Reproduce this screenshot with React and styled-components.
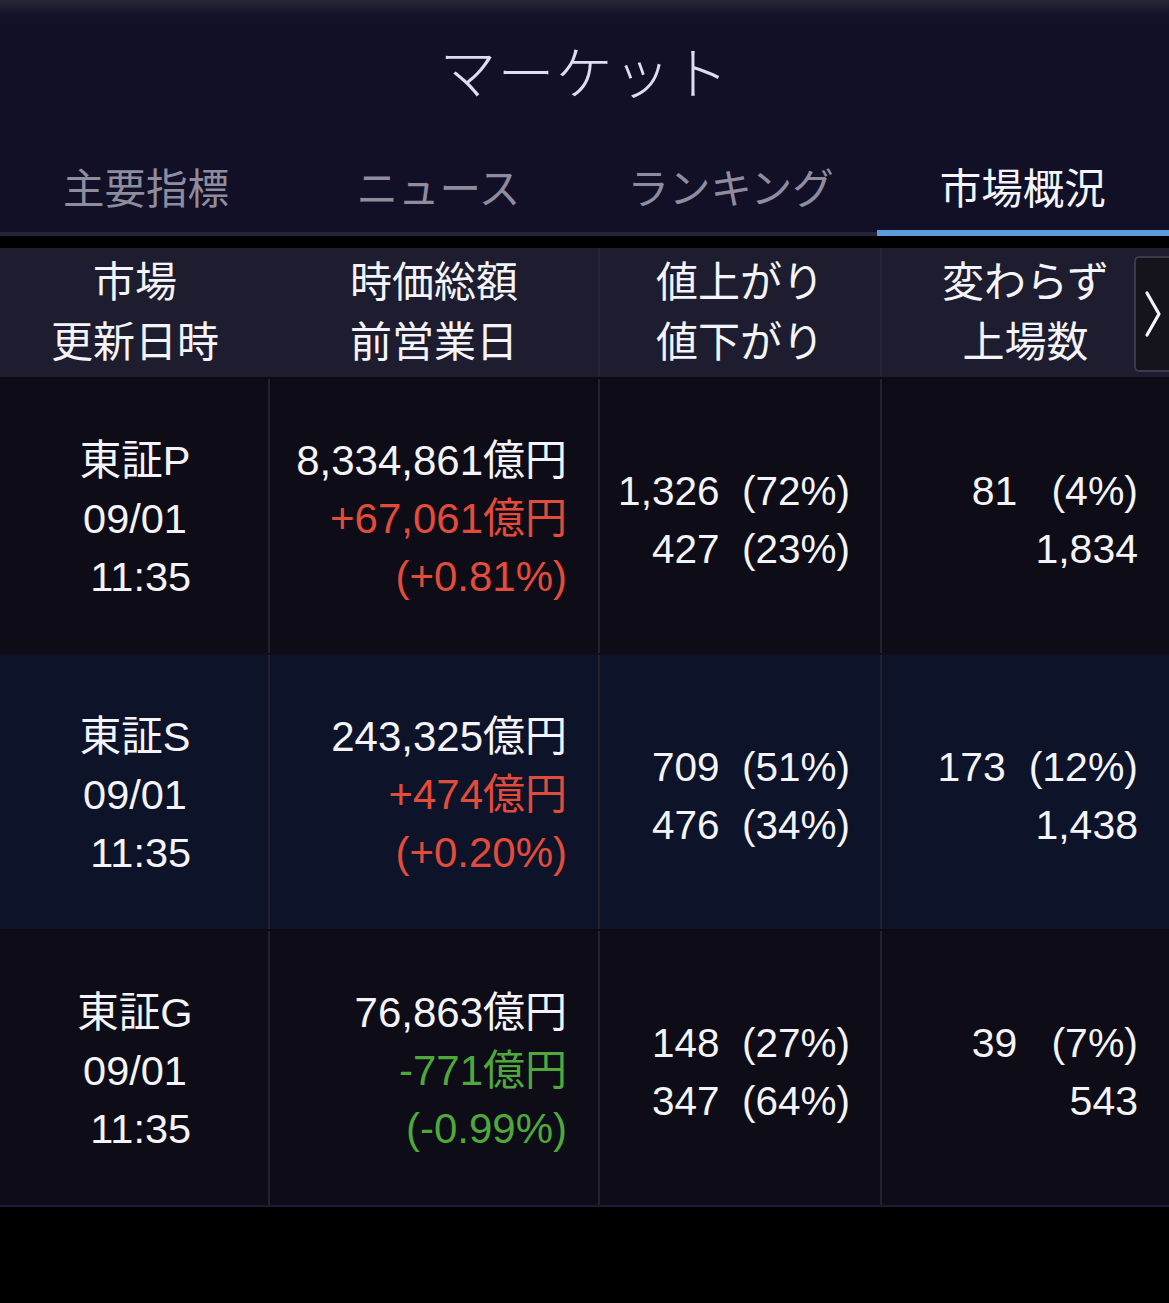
import React from "react";
import styled, { createGlobalStyle } from "styled-components";

const GlobalStyle = createGlobalStyle`
  html, body { margin: 0; padding: 0; background: #000; }
  body { font-family: "Liberation Sans", "Noto Sans CJK JP", sans-serif; }
  * { box-sizing: border-box; }
`;

const Page = styled.div`
  width: 1169px;
  min-height: 1303px;
  background: #000;
  color: #f2f2f8;
`;

const Nav = styled.header`
  background: linear-gradient(#262833 0px, #14122a 14px, #121027 30px);
`;

const TitleBar = styled.div`
  height: 132px;
  padding-top: 6px;
  display: flex;
  align-items: center;
  justify-content: center;
`;

const Title = styled.h1`
  margin: 0;
  font-family: "Noto Sans CJK JP", sans-serif;
  font-weight: 300;
  font-size: 57px;
  line-height: 70px;
  letter-spacing: 1px;
  color: #dedcf0;
`;

const TabRow = styled.nav`
  display: flex;
  height: 104px;
  box-shadow: inset 0 -4px 0 #24243a;
`;

const Tab = styled.div`
  flex: 1;
  display: flex;
  align-items: center;
  justify-content: center;
  padding-top: 10px;
  font-family: "Noto Sans CJK JP", sans-serif;
  font-size: 41.5px;
  line-height: 50px;
  color: ${(p) => (p.$active ? "#f4f4fa" : "#8e8c9e")};
  border-bottom: 6px solid ${(p) => (p.$active ? "#5b9bd9" : "transparent")};
`;

const Table = styled.section`
  margin-top: 12px;
  border-bottom: 2px solid #1c1a36;
`;

const HeadRow = styled.div`
  position: relative;
  display: grid;
  grid-template-columns: 268px 330px 282px 1fr;
  height: 129px;
  background: #1d1d2f;
`;

const HeadCell = styled.div`
  display: flex;
  flex-direction: column;
  align-items: center;
  justify-content: center;
  font-size: 42px;
  line-height: 60px;
  color: #f4f4fa;
  border-left: 2px solid ${(p) => (p.$divider ? "#25253a" : "transparent")};
`;

const MoreButton = styled.div`
  position: absolute;
  right: 0;
  top: 8px;
  width: 35px;
  height: 116px;
  background: #15141d;
  border: 2px solid #3a3a4a;
  border-right: none;
  border-radius: 5px 0 0 5px;
  display: flex;
  align-items: center;
  justify-content: center;
`;

const Row = styled.div`
  display: grid;
  grid-template-columns: 268px 330px 282px 1fr;
  height: 276px;
  background: ${(p) => (p.$alt ? "#0d1329" : "#0d0c17")};
  border-top: 2px solid ${(p) => (p.$alt ? "#0f0e1c" : "#0b0a14")};
`;

const Cell = styled.div`
  display: flex;
  flex-direction: column;
  justify-content: center;
  align-items: ${(p) => (p.$center ? "center" : "flex-end")};
  padding-right: ${(p) => p.$pr || 0}px;
  padding-top: ${(p) => p.$pt || 0}px;
  font-size: ${(p) => p.$size || 40}px;
  line-height: 58px;
  color: #f4f4fa;
  white-space: pre;
  border-left: 2px solid ${(p) => (p.$divider ? "#22222f" : "transparent")};
`;

const Line = styled.span`
  color: ${(p) =>
    p.$tone === "up" ? "#e34b3b" : p.$tone === "down" ? "#4fa83a" : "inherit"};
`;

const markets = [
  {
    name: "東証P",
    cap: "8,334,861億円",
    diff: "+67,061億円",
    pct: "(+0.81%)",
    tone: "up",
    up: "1,326  (72%)",
    down: "427  (23%)",
    flat: "81   (4%)",
    listed: "1,834",
  },
  {
    name: "東証S",
    cap: "243,325億円",
    diff: "+474億円",
    pct: "(+0.20%)",
    tone: "up",
    up: "709  (51%)",
    down: "476  (34%)",
    flat: "173  (12%)",
    listed: "1,438",
  },
  {
    name: "東証G",
    cap: "76,863億円",
    diff: "-771億円",
    pct: "(-0.99%)",
    tone: "down",
    up: "148  (27%)",
    down: "347  (64%)",
    flat: "39   (7%)",
    listed: "543",
  },
];

const tabs = ["主要指標", "ニュース", "ランキング", "市場概況"];

export default function App() {
  return (
    <Page>
      <GlobalStyle />
      <Nav>
        <TitleBar>
          <Title>マーケット</Title>
        </TitleBar>
        <TabRow>
          {tabs.map((t, i) => (
            <Tab key={t} $active={i === 3}>
              {t}
            </Tab>
          ))}
        </TabRow>
      </Nav>
      <Table>
        <HeadRow>
          <HeadCell>
            <span>市場</span>
            <span>更新日時</span>
          </HeadCell>
          <HeadCell>
            <span>時価総額</span>
            <span>前営業日</span>
          </HeadCell>
          <HeadCell $divider>
            <span>値上がり</span>
            <span>値下がり</span>
          </HeadCell>
          <HeadCell $divider>
            <span>変わらず</span>
            <span>上場数</span>
          </HeadCell>
          <MoreButton>
            <svg width="18" height="48" viewBox="0 0 18 48" fill="none">
              <path
                d="M3 3 L15 24 L3 45"
                stroke="#f4f4fa"
                strokeWidth="3.2"
                strokeLinecap="round"
                strokeLinejoin="round"
              />
            </svg>
          </MoreButton>
        </HeadRow>
        {markets.map((m, i) => (
          <Row key={m.name} $alt={i === 1}>
            <Cell $center $pt={6} $size={41.5}>
              <Line>{m.name}</Line>
              <Line>{"09/01"}</Line>
              <Line>{" 11:35"}</Line>
            </Cell>
            <Cell $divider $pr={31} $pt={6} $size={42}>
              <Line>{m.cap}</Line>
              <Line $tone={m.tone}>{m.diff}</Line>
              <Line $tone={m.tone}>{m.pct}</Line>
            </Cell>
            <Cell $divider $pr={30} $pt={8} $size={40.5}>
              <Line>{m.up}</Line>
              <Line>{m.down}</Line>
            </Cell>
            <Cell $divider $pr={31} $pt={8} $size={41}>
              <Line>{m.flat}</Line>
              <Line>{m.listed}</Line>
            </Cell>
          </Row>
        ))}
      </Table>
    </Page>
  );
}
